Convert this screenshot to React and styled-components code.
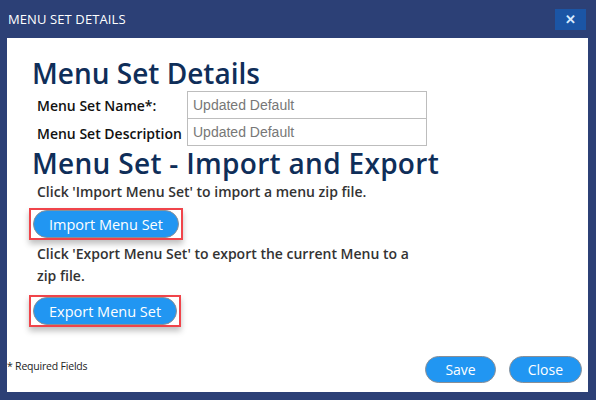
import styled, { createGlobalStyle } from "styled-components";

const GlobalStyle = createGlobalStyle`
  html, body {
    margin: 0;
    padding: 0;
    background: #2c4076;
  }
  body {
    font-family: "Open Sans", "Noto Sans", sans-serif;
  }
`;

const Dialog = styled.div`
  width: 596px;
  height: 400px;
  background: #2c4076;
  display: flex;
  flex-direction: column;
  box-sizing: border-box;
  padding: 0 8px 8px 7px;
`;

const TitleBar = styled.div`
  height: 38px;
  display: flex;
  align-items: center;
  justify-content: space-between;
  margin: 0 -8px 0 -7px;
  padding: 0 10px 0 8px;
`;

const TitleText = styled.span`
  color: #ffffff;
  font-size: 13px;
  letter-spacing: 0.1px;
`;

const CloseX = styled.button`
  width: 31px;
  height: 21px;
  margin-top: 1px;
  border: none;
  background: #1b55a5;
  color: #d6ebff;
  font-size: 13px;
  font-weight: 700;
  display: flex;
  align-items: center;
  justify-content: center;
  padding: 0;
`;

const Panel = styled.div`
  flex: 1;
  background: #ffffff;
  display: flex;
  flex-direction: column;
  padding: 20px 0 9px 0;
`;

const Body = styled.div`
  flex: 1;
  padding-left: 25px;
  display: flex;
  flex-direction: column;
`;

const Heading = styled.h1`
  margin: ${({ $m }) => $m || "0"};
  font-size: 28px;
  line-height: 29px;
  font-weight: 600;
  color: #0f2e59;
  letter-spacing: ${({ $ls }) => $ls || "0"};
`;

const FormGrid = styled.div`
  display: grid;
  grid-template-columns: 150px 240px;
  margin: 3px 0 0 5px;
`;

const Label = styled.label`
  font-size: 14px;
  font-weight: 600;
  color: #111111;
  display: flex;
  align-items: center;
  white-space: nowrap;
  overflow: hidden;
  height: 27px;
  padding-top: 2px;
  box-sizing: border-box;
`;

const Field = styled.div`
  height: ${({ $first }) => ($first ? "28px" : "27px")};
  box-sizing: border-box;
  border: 1px solid #bdbdbd;
  border-top: ${({ $first }) => ($first ? "1px solid #bdbdbd" : "none")};
  font-family: "Liberation Sans", Arial, sans-serif;
  font-size: 14px;
  color: #777777;
  padding-left: 5px;
  display: flex;
  align-items: center;
`;

const Text = styled.p`
  margin: ${({ $m }) => $m || "0 0 0 5px"};
  width: 392px;
  font-size: 14px;
  line-height: 22px;
  font-weight: 600;
  color: #333333;
`;

const Highlight = styled.div`
  align-self: flex-start;
  border: 2px solid #f0444a;
  padding: 0 2px;
  margin: ${({ $m }) => $m};
  box-shadow: 0 4px 6px rgba(0, 0, 0, 0.25);
  display: flex;
`;

const Pill = styled.button`
  height: ${({ $h }) => $h || "28px"};
  padding: 0 ${({ $px }) => $px || "15px"};
  border-radius: 15px;
  border: 1px solid #8a8f96;
  background: #2196f2;
  color: #ffffff;
  font-family: "Open Sans", "Noto Sans", sans-serif;
  font-size: ${({ $fs }) => $fs || "14.5px"};
  cursor: pointer;
`;

const Footer = styled.div`
  display: flex;
  align-items: flex-end;
  justify-content: space-between;
  padding-right: 6px;
`;

const Required = styled.span`
  font-size: 10.5px;
  color: #222222;
  margin-bottom: 10px;
  letter-spacing: -0.2px;
`;

const FooterButtons = styled.div`
  display: flex;
  gap: 13px;
`;

export default function App() {
  return (
    <>
      <GlobalStyle />
      <Dialog>
        <TitleBar>
          <TitleText>MENU SET DETAILS</TitleText>
          <CloseX>✕</CloseX>
        </TitleBar>
        <Panel>
          <Body>
            <Heading $m="1px 0 0 0">Menu Set Details</Heading>
            <FormGrid>
              <Label>Menu Set Name*:</Label>
              <Field $first>Updated Default</Field>
              <Label>Menu Set Description</Label>
              <Field>Updated Default</Field>
            </FormGrid>
            <Heading $m="3px 0 0 0" $ls="0.3px">
              Menu Set - Import and Export
            </Heading>
            <Text $m="3px 0 0 5px">
              Click 'Import Menu Set' to import a menu zip file.
            </Text>
            <Highlight $m="5px 0 3px -3px">
              <Pill>Import Menu Set</Pill>
            </Highlight>
            <Text>
              Click 'Export Menu Set' to export the current Menu to a zip file.
            </Text>
            <Highlight $m="8px 0 0 -3px">
              <Pill>Export Menu Set</Pill>
            </Highlight>
          </Body>
          <Footer>
            <Required>* Required Fields</Required>
            <FooterButtons>
              <Pill $px="19px" $fs="14px" $h="27px">Save</Pill>
              <Pill $px="18px" $fs="14px" $h="27px">Close</Pill>
            </FooterButtons>
          </Footer>
        </Panel>
      </Dialog>
    </>
  );
}
